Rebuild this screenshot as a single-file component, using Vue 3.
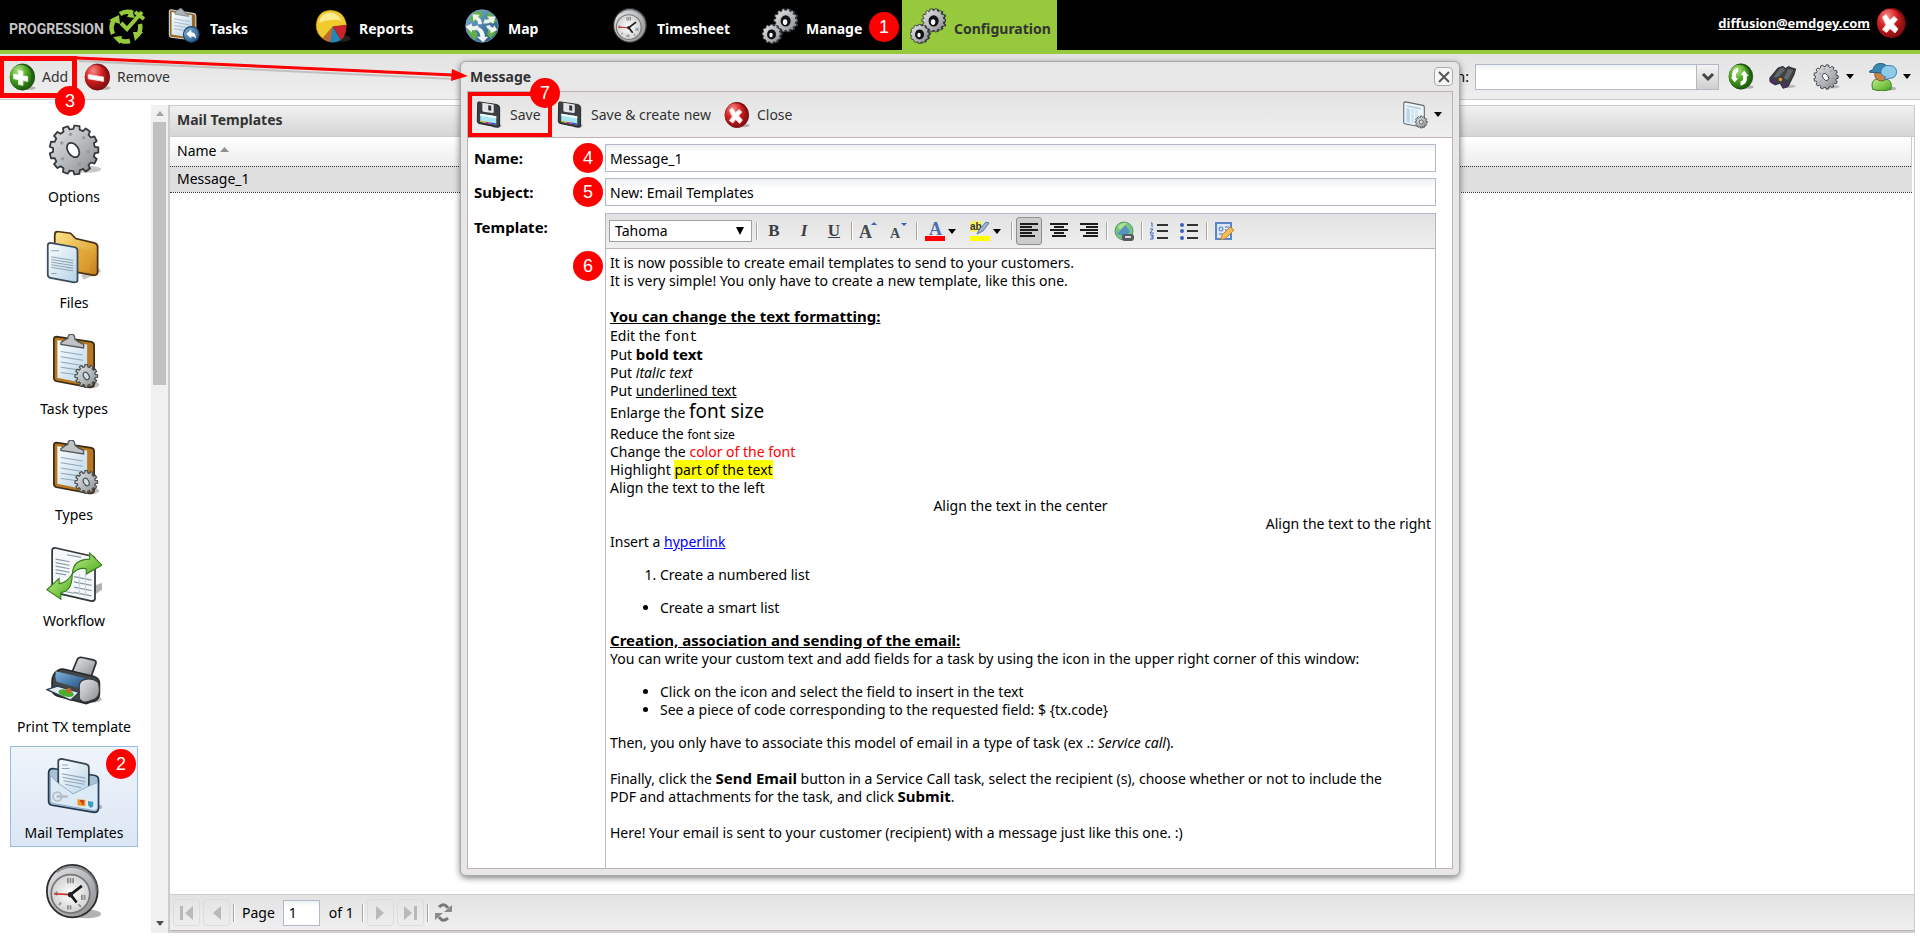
<script setup>
import { ref } from 'vue'

const navItems = [
  { label: 'Tasks', icon: 'i-tasks' },
  { label: 'Reports', icon: 'i-pie' },
  { label: 'Map', icon: 'i-globe' },
  { label: 'Timesheet', icon: 'i-clock' },
  { label: 'Manage', icon: 'i-gears', badge: 1 },
  { label: 'Configuration', icon: 'i-gears', active: true }
]

const sections = [
  { label: 'Options', icon: 'i-gear' },
  { label: 'Files', icon: 'i-files' },
  { label: 'Task types', icon: 'i-types' },
  { label: 'Types', icon: 'i-types' },
  { label: 'Workflow', icon: 'i-workflow' },
  { label: 'Print TX template', icon: 'i-printer' },
  { label: 'Mail Templates', icon: 'i-mail', active: true, badge: 2 },
  { label: '', icon: 'i-clock' }
]

const name = ref('Message_1')
const subject = ref('New: Email Templates')
const page = ref('1')
const search = ref('')
const family = ref('Tahoma')

// Outline of a cog with n teeth, centred on cx, cy
function cog(cx, cy, outer, inner, n) {
  const pts = []
  const step = (Math.PI * 2) / n
  for (let i = 0; i < n; i++) {
    const a = i * step
    const ring = [[-0.32, inner], [-0.22, outer], [0.22, outer], [0.32, inner]]
    for (const [k, r] of ring) {
      pts.push((cx + r * Math.cos(a + k * step)).toFixed(1) + ' ' + (cy + r * Math.sin(a + k * step)).toFixed(1))
    }
  }
  return 'M' + pts.join('L') + 'Z'
}
</script>

<template>
  <div class="app">
    <svg class="defs" width="0" height="0" aria-hidden="true">
      <defs>
        <linearGradient id="gSteel" x1="0" y1="0" x2="1" y2="1"><stop offset="0" stop-color="#e4e6e8" /><stop offset=".5" stop-color="#b9bcbf" /><stop offset="1" stop-color="#85888b" /></linearGradient>
        <linearGradient id="gGold" x1="0" y1="0" x2="1" y2="1"><stop offset="0" stop-color="#fbe48a" /><stop offset=".6" stop-color="#e5ae42" /><stop offset="1" stop-color="#bd7c17" /></linearGradient>
        <linearGradient id="gPaper" x1="0" y1="0" x2="1" y2="1"><stop offset="0" stop-color="#fdfeff" /><stop offset="1" stop-color="#b5d3e6" /></linearGradient>
        <linearGradient id="gBlue" x1="0" y1="0" x2="1" y2="1"><stop offset="0" stop-color="#7fb4dd" /><stop offset="1" stop-color="#1d4c7c" /></linearGradient>
        <radialGradient id="gRed" cx=".4" cy=".25" r=".8"><stop offset="0" stop-color="#f58a86" /><stop offset=".5" stop-color="#d31f20" /><stop offset="1" stop-color="#840c0e" /></radialGradient>
        <radialGradient id="gGreen" cx=".4" cy=".25" r=".8"><stop offset="0" stop-color="#b2e68a" /><stop offset=".5" stop-color="#4da423" /><stop offset="1" stop-color="#1b5a0a" /></radialGradient>
        <linearGradient id="gLeaf" x1="0" y1="0" x2="1" y2="1"><stop offset="0" stop-color="#c2f08c" /><stop offset="1" stop-color="#4ba81b" /></linearGradient>
        <radialGradient id="gFace"><stop offset="0" stop-color="#ffffff" /><stop offset="1" stop-color="#d2d2d2" /></radialGradient>
      </defs>

      <symbol id="i-gear" viewBox="0 0 64 64">
        <ellipse cx="46" cy="54" rx="17" ry="4" fill="#000" opacity=".22" />
        <path :d="cog(32, 32, 28, 24, 13)" fill="url(#gSteel)" stroke="#33373a" stroke-width="2" stroke-linejoin="round" />
        <g fill="#979a9d"><circle cx="18" cy="24" r="2" /><circle cx="28" cy="14" r="2" /><circle cx="43" cy="18" r="2" /><circle cx="48" cy="34" r="2" /><circle cx="38" cy="48" r="2" /><circle cx="19" cy="42" r="2" /></g>
        <ellipse cx="31" cy="32" rx="6" ry="9" transform="rotate(-35 31 32)" fill="#fff" stroke="#33373a" stroke-width="2" />
      </symbol>

      <symbol id="i-files" viewBox="0 0 64 64">
        <path d="M40 54l21-8 2 4-20 9z" fill="#000" opacity=".22" />
        <path d="M13 4q-3 0-3 4v38l45 8q4 0 4-4V22q0-4-4-5L34 12l-6-6z" fill="url(#gGold)" stroke="#4a3214" stroke-width="2" />
        <path d="M30 22l21 4-1 24-14-3z" fill="#e09b2c" opacity=".5" />
        <path d="M5 17l28 5q3 1 3 4v34q0 2-4 2L5 57q-3-1-3-4V20q0-3 3-3z" fill="url(#gPaper)" stroke="#3a4a5d" stroke-width="2" />
        <g stroke="#8497a8" stroke-width="1"><path d="M6 26h9M6 33l25 4M6 36l25 4M6 39l25 4M6 42l25 4M6 45l25 4M6 52h6" /></g>
      </symbol>

      <symbol id="i-types" viewBox="0 0 64 64">
        <ellipse cx="50" cy="58" rx="11" ry="4" fill="#000" opacity=".25" />
        <path d="M12 3l40 6q3 1 3 4v44q0 4-5 4L12 54q-3-1-3-4V6q0-3 3-3z" fill="#b87820" stroke="#3c2b17" stroke-width="2" />
        <path d="M13 7l34 5v45l-34-7z" fill="url(#gPaper)" />
        <path d="M17 10l4-3 4-2q0-5 4-5t4 6l4 3 6 3v4L17 12z" fill="#bfc3c6" stroke="#53585c" stroke-width="1.5" />
        <g stroke="#8ea7b9" stroke-width="1.4"><path d="M17 20l25 4M17 26l25 4M17 32l25 4M17 38l20 3M17 44l15 2" /></g>
        <path :d="cog(46, 48, 13, 10.5, 12)" fill="url(#gSteel)" stroke="#4b4f52" stroke-width="1.4" />
        <ellipse cx="46" cy="48" rx="3" ry="4.5" transform="rotate(-30 46 48)" fill="#cfe0ea" stroke="#4b4f52" stroke-width="1.4" />
      </symbol>

      <symbol id="i-workflow" viewBox="0 0 64 64">
        <path d="M54 46l10-4v8l-12 8z" fill="#000" opacity=".3" />
        <path d="M10 2l44 10q2 1 2 3v45q0 3-4 3L9 53q-2-1-2-3V5q0-3 3-3z" fill="#f4f8fb" stroke="#33373a" stroke-width="2" />
        <g stroke="#8c98a1" stroke-width="1.2"><path d="M24 10l16 3M11 15l16 3M11 19l16 3M11 23l16 3M11 27l16 3M11 31l12 2M32 35l20 4M32 41l20 4M32 47l20 4M32 53l20 4M12 50l20 4" /><path d="M38 32v24M45 32v26" stroke="#bdd2e0" /></g>
        <path d="M30 32q1-17 20-17V8l14 14-18 10v-6q-9-2-16 6z" fill="url(#gLeaf)" stroke="#2e7a14" stroke-width="1.2" />
        <path d="M30 32q0 20-13 21v8L1 50l14-13v6q9-1 15-11z" fill="url(#gLeaf)" stroke="#2e7a14" stroke-width="1.2" />
      </symbol>

      <symbol id="i-printer" viewBox="0 0 64 64">
        <ellipse cx="52" cy="54" rx="12" ry="4" fill="#000" opacity=".25" />
        <g transform="translate(0 4)">
          <path d="M36 4q1-2 4-2l14 3q4 1 3 4l-6 17-22-5z" fill="url(#gSteel)" stroke="#2e3133" stroke-width="2" />
          <path d="M7 30q0-9 7-13 3-2 8-1l33 8q6 2 6 8v12q0 8-10 9l-5 2-30-8q-8-2-9-7z" fill="#43474a" stroke="#25282a" stroke-width="2" />
          <path d="M11 18l34 8q-5 3-5 12L12 30q-2-6-1-12z" fill="url(#gBlue)" />
          <path d="M38 48V34q1-6 8-7 8-1 13 3 2 3 2 10 0 9-8 11-7 3-10 2-5-2-5-5z" fill="url(#gSteel)" stroke="#36393b" stroke-width="1.4" />
          <path d="M1 39l12-4 25 7-10 9z" fill="#e6edf2" stroke="#2c3e4f" stroke-width="1.5" />
          <ellipse cx="23" cy="43" rx="9" ry="4" transform="rotate(12 23 43)" fill="#4cae2f" /><circle cx="26" cy="40" r="3" fill="#c7682c" />
        </g>
      </symbol>

      <symbol id="i-mail" viewBox="0 0 64 64">
        <ellipse cx="56" cy="56" rx="9" ry="3" fill="#000" opacity=".25" />
        <path d="M8 12l48 8q4 1 4 5v32q0 5-5 5L7 54q-4-1-4-5V17q0-5 5-5z" fill="#a9c1d8" stroke="#22384f" stroke-width="2" />
        <path d="M14 4q0-3 4-3l28 6q3 1 3 4v25L31 47 14 30z" fill="url(#gPaper)" stroke="#3b4550" stroke-width="2" />
        <g stroke="#91a5b6" stroke-width="1.2"><path d="M18 8h7M18 12h9M18 18l27 5M19 22l26 5M20 26l24 4M22 30l18 4" /></g>
        <path d="M5 20l8 8 18 13 18-9 10-4v28q0 4-4 4L8 52q-3-1-3-4z" fill="#dceaf5" stroke="#8aa5bf" stroke-width="1" />
        <circle cx="13" cy="44" r="5" fill="none" stroke="#b6bdc6" stroke-width="2" /><path d="M12 44h13" stroke="#b6bdc6" stroke-width="3" />
        <path d="M36 47l9 1v7l-9-1z" fill="#ef8f1f" /><path d="M39 49h3v4" stroke="#c7311d" fill="none" stroke-width="2" /><path d="M48 49l6 1v5l-3 2-3-3z" fill="#3d9dc2" />
      </symbol>

      <symbol id="i-clock" viewBox="0 0 64 64">
        <ellipse cx="46" cy="57" rx="17" ry="5" fill="#000" opacity=".3" />
        <ellipse cx="30" cy="31" rx="29" ry="30" fill="url(#gSteel)" stroke="#2b2b2b" stroke-width="2" />
        <path d="M12 9Q26-1 42 6q16 8 16 25" fill="none" stroke="#6b6b6b" stroke-width="3" opacity=".6" />
        <circle cx="28" cy="34" r="22" fill="url(#gFace)" stroke="#777" stroke-width="2" />
        <g stroke="#8b8b8b" stroke-width="2"><path d="M25 16v6M28 16v6M31 16v6M25 47v5M28 47v5M41 35v6M44 35v6M12 31v5M15 47l2-3M40 49l-3-3" /></g>
        <path d="M28 35L41 25M28 35l7 9" stroke="#171717" stroke-width="3" /><path d="M29 35L9 34" stroke="#c82c2c" stroke-width="2" /><circle cx="28" cy="35" r="3" fill="#222" />
      </symbol>

      <symbol id="i-gears" viewBox="0 0 64 64">
        <path :d="cog(45, 22, 21, 18, 14)" fill="#34383a" />
        <path :d="cog(42, 22, 21, 18, 14)" fill="url(#gSteel)" stroke="#333" stroke-width="1.5" />
        <ellipse cx="42" cy="23" rx="9" ry="10" fill="#121212" /><ellipse cx="41" cy="25" rx="4" ry="5" fill="#fff" />
        <path :d="cog(20, 46, 17, 15, 12)" fill="#34383a" />
        <path :d="cog(17, 46, 17, 15, 12)" fill="url(#gSteel)" stroke="#333" stroke-width="1.5" />
        <ellipse cx="17" cy="47" rx="8" ry="9" fill="#121212" /><ellipse cx="16" cy="48" rx="3" ry="4" fill="#fff" />
      </symbol>

      <symbol id="i-tasks" viewBox="0 0 64 64">
        <path d="M9 3l41 7q3 1 3 4v40q0 4-5 3L9 52q-3-1-3-4V6q0-3 3-3z" fill="#9b6a22" stroke="#c9d6e2" stroke-width="2" />
        <path d="M10 7l36 6v40l-36-6z" fill="url(#gPaper)" />
        <path d="M16 7l6-4q4-5 8 0l4 6 6 3v3L16 11z" fill="#aab0b5" stroke="#5f666b" />
        <g stroke="#9eafbd" stroke-width="1.4"><path d="M14 19l28 5M14 25l28 5M14 31l24 4M14 37l20 3" /></g>
        <circle cx="45" cy="47" r="14" fill="url(#gBlue)" stroke="#1c3e63" stroke-width="2" />
        <path d="M36 46l9-8v5q9 1 8 11-3-4-8-4v4z" fill="#fff" />
      </symbol>

      <symbol id="i-pie" viewBox="0 0 64 64">
        <ellipse cx="48" cy="54" rx="15" ry="6" fill="#444" opacity=".5" />
        <path d="M2 30Q4 6 26 4q26 0 30 26l-24 3-18 21Q2 46 2 30z" fill="#f1ca2b" stroke="#b68a0e" />
        <path d="M7 26Q10 8 27 8q14 1 20 14-20-3-40 4z" fill="#fbec94" />
        <path d="M32 33L13 54q3 4 14 7l6-13z" fill="#bd6b2e" /><path d="M32 33l-5 28q9 2 19-4z" fill="#2387b8" /><path d="M32 33l14 24q10-8 10-27z" fill="#c9242a" />
      </symbol>

      <symbol id="i-globe" viewBox="0 0 64 64">
        <circle cx="32" cy="32" r="29" fill="url(#gBlue)" stroke="#94b7d6" stroke-width="1" />
        <path d="M10 18q8-12 20-13l3 8-8 9-12 3zM42 6q12 6 16 18l-9 4-8-8zM6 36l12 1 6 10-4 10Q8 48 6 36zM44 36l14 0q-2 12-11 18l-6-8z" fill="#62b146" />
        <g fill="#eef4ee"><path d="M15 11l13 1-3 4q7 4 7 13l-7 0q0-7-5-9l-3 4z" /><path d="M56 15l-4 13-4-3q-7 4-14 2l3-7q5 2 8-1l-4-4z" /><path d="M34 61l-11-10h6q0-9-7-12l5-5q10 5 10 17h6z" /><path d="M3 33l11-6v5q6 1 10-2l3 6q-6 5-13 3v5z" /><path d="M59 39l-12 6 0-5q-6-3-8-8l7-2q1 4 5 5l3-4z" /></g>
      </symbol>

      <symbol id="i-floppy" viewBox="0 0 64 64">
        <path d="M50 52l12 4-6 6H40z" fill="#000" opacity=".3" />
        <path d="M4 3q0-2 3-2l42 6q7 2 7 7v42q0 5-5 5L7 52q-4-1-4-5z" fill="#3d4043" stroke="#151617" stroke-width="2" />
        <path d="M15 3l27 4v18q0 2-3 2L17 24q-2-1-2-3z" fill="#e6e7e8" /><path d="M29 9l7 1v12l-7-1z" fill="#333" />
        <path d="M10 29l38 6v20l-38-7z" fill="#a6e5f3" /><path d="M10 29l38 6v5l-38-6z" fill="#f1fbfd" />
        <path d="M10 45l13 3v3l-13-3z" fill="#d3b51c" /><path d="M23 48l13 2v3l-13-2z" fill="#c934a9" /><path d="M36 50l12 2v3l-12-2z" fill="#2f4ec9" />
      </symbol>

      <symbol id="i-redx" viewBox="0 0 64 64">
        <ellipse cx="50" cy="57" rx="13" ry="4" fill="#000" opacity=".25" />
        <ellipse cx="33" cy="32" rx="28" ry="30" fill="#8e1012" stroke="#5e0809" stroke-width="1.5" /><ellipse cx="29" cy="32" rx="25" ry="28" fill="url(#gRed)" />
        <path d="M15 20l7-5 8 11 8-7 7 6-8 9 9 10-6 8-10-9-7 8-8-6 7-9z" fill="#fff" stroke="#f7d6d6" stroke-linejoin="round" stroke-width="2" />
      </symbol>

      <symbol id="i-minus" viewBox="0 0 64 64">
        <ellipse cx="50" cy="57" rx="13" ry="4" fill="#000" opacity=".25" />
        <ellipse cx="33" cy="32" rx="28" ry="30" fill="#8e1012" stroke="#5e0809" stroke-width="1.5" /><ellipse cx="29" cy="32" rx="25" ry="28" fill="url(#gRed)" />
        <path d="M12 26l35 6v10l-35-6z" fill="#fff" stroke="#f7d6d6" stroke-width="2" stroke-linejoin="round" />
      </symbol>

      <symbol id="i-plus" viewBox="0 0 64 64">
        <ellipse cx="50" cy="57" rx="13" ry="4" fill="#000" opacity=".25" />
        <ellipse cx="33" cy="32" rx="28" ry="30" fill="#20600e" stroke="#103d06" stroke-width="1.5" /><ellipse cx="29" cy="32" rx="25" ry="28" fill="url(#gGreen)" />
        <path d="M24 17l10 2v10l11 2v11l-11-2v11l-10-2V38l-11-2V25l11 2z" fill="#fff" stroke="#e4f5da" stroke-width="2" stroke-linejoin="round" />
      </symbol>

      <symbol id="i-refresh" viewBox="0 0 64 64">
        <ellipse cx="50" cy="57" rx="13" ry="4" fill="#000" opacity=".25" />
        <ellipse cx="33" cy="32" rx="28" ry="30" fill="#20600e" stroke="#103d06" stroke-width="1.5" /><ellipse cx="29" cy="32" rx="25" ry="28" fill="url(#gGreen)" />
        <path d="M26 11q-16 3-14 23l-3 0 9 12 8-9-5-2q-1-12 5-14z" fill="#fff" /><path d="M32 54q17-3 15-23l4 0-10-13-8 9 5 3q2 12-6 14z" fill="#fff" />
      </symbol>

      <symbol id="i-binoculars" viewBox="0 0 64 64">
        <ellipse cx="46" cy="55" rx="16" ry="4" fill="#000" opacity=".2" />
        <path d="M20 12l12-4 6 5 7-5 6 3 11 3-4 14-14 28-12 4-7-12-12 4L1 44v-9z" fill="#3e4144" stroke="#1b1c1e" stroke-width="2" />
        <path d="M23 14l9-3 5 6-18 17-9 0zM44 14l12 3-13 23-9-4z" fill="#64686b" />
        <ellipse cx="9" cy="43" rx="7" ry="6" fill="#4b3161" /><ellipse cx="36" cy="53" rx="7" ry="6" fill="#4b3161" /><circle cx="26" cy="39" r="4" fill="#ef9a20" />
      </symbol>

      <symbol id="i-user" viewBox="0 0 64 64">
        <ellipse cx="50" cy="58" rx="12" ry="4" fill="#000" opacity=".25" />
        <path d="M7 50q0-12 13-14l20 1q11 3 11 15l-1 8q-21 7-42 0z" fill="url(#gLeaf)" stroke="#2d7115" stroke-width="2" />
        <ellipse cx="28" cy="26" rx="15" ry="15" fill="#c98343" stroke="#613a17" stroke-width="1.5" />
        <path d="M12 22l-11-1q-1-4 8-5Q11 1 27 1q12 0 17 12l-4 10z" fill="#3a89b3" stroke="#1c536f" stroke-width="2" />
        <path d="M38 6q24-3 25 13 0 16-16 16l-12 4 3-7q-11-3-11-12 1-11 11-14z" fill="#8fcbe9" stroke="#2c739b" stroke-width="2" />
      </symbol>

      <symbol id="i-sheet" viewBox="0 0 64 64">
        <path d="M8 2l40 8q3 1 3 4v43q0 4-4 3L6 52q-2-1-2-3V5q0-3 4-3z" fill="#eef6fb" stroke="#62696f" stroke-width="2.5" />
        <path d="M10 9l34 7v4L10 13z" fill="#b9cfde" /><path d="M10 16l8 2v32l-8-2z" fill="#b9d5e8" /><path d="M21 18l6 1v32l-6-1z" fill="#cfe3f0" /><path d="M30 20l6 1v31l-6-1z" fill="#cfe3f0" />
        <path :d="cog(44, 48, 14, 11, 12)" fill="url(#gSteel)" stroke="#5b6063" stroke-width="2" /><circle cx="44" cy="48" r="4.5" fill="#dfe4e7" stroke="#5b6063" stroke-width="2" />
      </symbol>
    </svg>

    <header class="topbar">
      <div class="logo">
        <span class="brand">PROGRESSION</span>
        <svg width="38" height="36" viewBox="0 0 38 36" aria-hidden="true">
          <g fill="none" stroke="#97c93d" stroke-width="4.5">
            <path d="M5 25A14 14 0 0 1 7 10" /><path d="M12 5A14 14 0 0 1 25 4" /><path d="M32 15A14 14 0 0 1 29 27" /><path d="M22 32A14 14 0 0 1 9 29" />
            <path d="M13 14l6 6L34 3" stroke-width="4" />
          </g>
          <path d="M1 11l10-5 1 9zM23 0l4 9-8-1zM25 23h10l-8 9zM14 27l-2 8-7-7z" fill="#97c93d" /><path d="M27 3l9 7" stroke="#97c93d" stroke-width="4" />
        </svg>
      </div>
      <nav class="nav" aria-label="Modules">
        <button v-for="n in navItems" :key="n.label" type="button" class="tab" :class="{ active: n.active }">
          <svg width="36" height="36" aria-hidden="true"><use :href="'#' + n.icon" /></svg>
          <span>{{ n.label }}</span>
          <b v-if="n.badge" class="badge b-nav">{{ n.badge }}</b>
        </button>
      </nav>
      <a class="account" href="#">diffusion@emdgey.com</a>
      <button type="button" class="logout" aria-label="Log out"><svg width="32" height="36" aria-hidden="true"><use href="#i-redx" /></svg></button>
    </header>

    <div class="toolbar">
      <button type="button" class="tool marked">
        <svg width="28" height="28" aria-hidden="true"><use href="#i-plus" /></svg><span>Add</span>
        <b class="badge b-add">3</b>
      </button>
      <button type="button" class="tool"><svg width="28" height="28" aria-hidden="true"><use href="#i-minus" /></svg><span>Remove</span></button>
      <div class="tools-right">
        <label for="search">Search in:</label>
        <div class="combo">
          <input id="search" v-model="search" type="text">
          <button type="button" aria-label="Open list"><svg width="12" height="8" viewBox="0 0 12 8"><path d="M1 1l5 5 5-5" fill="none" stroke="#444" stroke-width="3" /></svg></button>
        </div>
        <button type="button" class="mini" aria-label="Refresh"><svg width="27" height="27"><use href="#i-refresh" /></svg></button>
        <button type="button" class="mini" aria-label="Find"><svg width="28" height="27"><use href="#i-binoculars" /></svg></button>
        <button type="button" class="mini" aria-label="Settings"><svg width="28" height="28"><use href="#i-gear" /></svg><i class="caret"></i></button>
        <button type="button" class="mini" aria-label="User"><svg width="28" height="28"><use href="#i-user" /></svg><i class="caret"></i></button>
      </div>
    </div>

    <div class="main">
      <aside class="side">
        <div class="items">
          <button v-for="(s, i) in sections" :key="i" type="button" class="item" :class="{ active: s.active }" :aria-label="s.label || 'Schedule'">
            <svg width="56" height="56" aria-hidden="true"><use :href="'#' + s.icon" /></svg>
            <span>{{ s.label }}</span>
            <b v-if="s.badge" class="badge b-side">{{ s.badge }}</b>
          </button>
        </div>
        <div class="scroll">
          <svg width="8" height="5" viewBox="0 0 8 5"><path d="M4 0l4 5H0z" fill="#a3a3a3" /></svg>
          <div class="thumb"></div>
          <svg width="8" height="5" viewBox="0 0 8 5"><path d="M0 0h8L4 5z" fill="#505050" /></svg>
        </div>
      </aside>

      <section class="panel">
        <h2>Mail Templates</h2>
        <div class="grid">
          <table>
            <thead><tr><th>Name <svg width="9" height="5" viewBox="0 0 9 5"><path d="M4.500 0L9 5H0z" fill="#909090" /></svg></th></tr></thead>
            <tbody><tr><td>Message_1</td></tr></tbody>
          </table>
        </div>
        <footer class="pager">
          <button type="button" class="pg" aria-label="First page"><svg width="14" height="14" viewBox="0 0 14 14" fill="#b9b9b9"><path d="M0 0h3v14H0zM13 0v14L5 7z" /></svg></button>
          <button type="button" class="pg" aria-label="Previous page"><svg width="14" height="14" viewBox="0 0 14 14" fill="#b9b9b9"><path d="M11 0v14L3 7z" /></svg></button>
          <i class="sep"></i>
          <label for="page">Page</label>
          <input id="page" v-model="page" type="text">
          <span class="of">of 1</span>
          <i class="sep"></i>
          <button type="button" class="pg" aria-label="Next page"><svg width="14" height="14" viewBox="0 0 14 14" fill="#b9b9b9"><path d="M3 0v14l8-7z" /></svg></button>
          <button type="button" class="pg" aria-label="Last page"><svg width="14" height="14" viewBox="0 0 14 14" fill="#b9b9b9"><path d="M11 0h3v14h-3zM1 0v14l8-7z" /></svg></button>
          <i class="sep"></i>
          <button type="button" class="reload" aria-label="Reload">
            <svg width="19" height="19" viewBox="0 0 19 19"><g fill="none" stroke="#777" stroke-width="3"><path d="M5 4Q10-1 14 5" /><path d="M14 15q-5 5-9-1" /></g><path d="M18 2v7h-8zM1 17v-7h8z" fill="#8b8b8b" /></svg>
          </button>
        </footer>
      </section>
    </div>

    <div class="overlay">
      <section class="dialog" role="dialog" aria-label="Message">
        <div class="title">
          <h1>Message</h1>
          <button type="button" class="x" aria-label="Close window"><svg width="12" height="12" viewBox="0 0 12 12"><path d="M1 1l10 10M11 1L1 11" stroke="#555" stroke-width="2" /></svg></button>
        </div>
        <div class="inner">
          <div class="dtools">
            <button type="button" class="tool marked2"><svg width="27" height="28" aria-hidden="true"><use href="#i-floppy" /></svg><span>Save</span><b class="badge b-save">7</b></button>
            <button type="button" class="tool"><svg width="27" height="28" aria-hidden="true"><use href="#i-floppy" /></svg><span>Save &amp; create new</span></button>
            <button type="button" class="tool close"><svg width="27" height="28" aria-hidden="true"><use href="#i-redx" /></svg><span>Close</span></button>
            <button type="button" class="mini insert" aria-label="Insert field"><svg width="28" height="28"><use href="#i-sheet" /></svg><i class="caret"></i></button>
          </div>
          <form class="form" @submit.prevent>
            <label for="f-name">Name:</label>
            <div class="cell"><b class="badge b-field">4</b><input id="f-name" v-model="name" type="text"></div>
            <label for="f-subject">Subject:</label>
            <div class="cell"><b class="badge b-field">5</b><input id="f-subject" v-model="subject" type="text"></div>
            <label id="l-template" class="tpl">Template:</label>
            <div class="editor">
              <b class="badge b-editor">6</b>
              <div class="etools">
                <div class="font">
                  <select v-model="family" aria-label="Font"><option>Tahoma</option></select>
                  <svg width="8" height="8" viewBox="0 0 8 8"><path d="M0 0h8L4 8z" /></svg>
                </div>
                <i class="sep"></i>
                <button type="button" class="eb serif"><b>B</b></button>
                <button type="button" class="eb serif"><em>I</em></button>
                <button type="button" class="eb serif"><u>U</u></button>
                <i class="sep"></i>
                <button type="button" class="eb" aria-label="Grow text"><svg width="20" height="20" viewBox="0 0 20 20"><text x="0" y="17" font-family="Liberation Serif, serif" font-weight="bold" font-size="18" fill="#444c50">A</text><path d="M12 4l3-3 3 3z" fill="#3a63b0" /></svg></button>
                <button type="button" class="eb" aria-label="Shrink text"><svg width="20" height="20" viewBox="0 0 20 20"><text x="1" y="17" font-family="Liberation Serif, serif" font-weight="bold" font-size="14" fill="#444c50">A</text><path d="M12 2h6l-3 3z" fill="#3a63b0" /></svg></button>
                <i class="sep"></i>
                <button type="button" class="eb wide" aria-label="Font color"><svg width="20" height="20" viewBox="0 0 20 20"><text x="4" y="14" font-family="Liberation Serif, serif" font-weight="bold" font-size="18" fill="#4a6cb0">A</text><path d="M0 15h20v5H0z" fill="#f00" /></svg><i class="caret"></i></button>
                <button type="button" class="eb wide" aria-label="Highlight color"><svg width="20" height="20" viewBox="0 0 20 20"><path d="M0 0h12v11H0z" fill="#f4f06a" /><text x="0" y="9" font-family="Liberation Sans, sans-serif" font-weight="bold" font-size="10" fill="#333">ab</text><path d="M19 2l-6 8-6 3 2-4 7-8z" fill="#9bb5d9" stroke="#58779f" /><path d="M0 15h20v5H0z" fill="#ff0" /></svg><i class="caret"></i></button>
                <i class="sep"></i>
                <button type="button" class="eb on" aria-label="Align left"><svg width="18" height="16" viewBox="0 0 18 16"><path d="M0 1h18M0 4h12M0 7h18M0 10h12M0 13h15" stroke="#1d1d1d" stroke-width="2" /></svg></button>
                <button type="button" class="eb" aria-label="Align center"><svg width="18" height="16" viewBox="0 0 18 16"><path d="M0 1h18M4 4h10M0 7h18M4 10h10M2 13h14" stroke="#1d1d1d" stroke-width="2" /></svg></button>
                <button type="button" class="eb" aria-label="Align right"><svg width="18" height="16" viewBox="0 0 18 16"><path d="M0 1h18M6 4h12M0 7h18M6 10h12M3 13h15" stroke="#1d1d1d" stroke-width="2" /></svg></button>
                <i class="sep"></i>
                <button type="button" class="eb" aria-label="Link"><svg width="21" height="21" viewBox="0 0 21 21"><circle cx="10" cy="10" r="9" fill="#7ac483" stroke="#4c9a62" /><path d="M3 13l8-9 5 6-4 6z" fill="#5694c4" /><path d="M4 5q5-4 9-3l-7 7z" fill="#b0e48f" /><rect x="8" y="13" width="12" height="7" rx="3" fill="#555b60" /><path d="M11 16h6" stroke="#d6dadd" stroke-width="2" /></svg></button>
                <i class="sep"></i>
                <button type="button" class="eb" aria-label="Numbered list"><svg width="18" height="18" viewBox="0 0 18 18"><path d="M7 3h11M7 9h11M7 16h11" stroke="#333" stroke-width="2" /><path d="M1 1h1v4M0 7h3l-3 4h4M0 13h3v4H0M1 15h2" stroke="#3a63c0" fill="none" /></svg></button>
                <button type="button" class="eb" aria-label="Bulleted list"><svg width="18" height="18" viewBox="0 0 18 18"><path d="M7 3h11M7 9h11M7 16h11" stroke="#333" stroke-width="2" /><g fill="#3a63c0"><circle cx="2" cy="3" r="2" /><circle cx="2" cy="9" r="2" /><circle cx="2" cy="16" r="2" /></g></svg></button>
                <i class="sep"></i>
                <button type="button" class="eb" aria-label="Edit source"><svg width="19" height="19" viewBox="0 0 19 19"><rect x="1" y="1" width="15" height="16" fill="#dbe7f8" stroke="#5c84c9" stroke-width="2" /><circle cx="6" cy="7" r="2" fill="none" stroke="#4a74be" /><path d="M10 5h4M10 8h3M4 12h4" stroke="#4a74be" /><path d="M6 18l1-5 8-8 4 3-8 8z" fill="#f5bd57" stroke="#c8842a" /></svg></button>
              </div>
              <div class="text" contenteditable="true" role="textbox" aria-multiline="true" aria-labelledby="l-template">
                <div>It is now possible to create email templates to send to your customers.</div>
                <div>It is very simple! You only have to create a new template, like this one.</div>
                <div><br></div>
                <div><b><u>You can change the text formatting:</u></b></div>
                <div class="l-mono">Edit the <span class="mono">font</span></div>
                <div>Put <b>bold text</b></div>
                <div>Put <em>italic text</em></div>
                <div>Put <u>underlined text</u></div>
                <div class="l-big">Enlarge the <span class="big">font size</span></div>
                <div>Reduce the <span class="small">font size</span></div>
                <div>Change the <span class="red">color of the font</span></div>
                <div>Highlight <mark>part of the text</mark></div>
                <div>Align the text to the left</div>
                <div class="center">Align the text in the center</div>
                <div class="right">Align the text to the right</div>
                <div>Insert a <a href="#">hyperlink</a></div>
                <ol><li>Create a numbered list</li></ol>
                <ul><li>Create a smart list</li></ul>
                <div><b><u>Creation, association and sending of the email:</u></b></div>
                <div>You can write your custom text and add fields for a task by using the icon in the upper right corner of this window:</div>
                <ul><li>Click on the icon and select the field to insert in the text</li><li>See a piece of code corresponding to the requested field: $ {tx.code}</li></ul>
                <div>Then, you only have to associate this model of email in a type of task (ex .: <em>Service call</em>).</div>
                <div><br></div>
                <div class="narrow">Finally, click the <b>Send Email</b> button in a Service Call task, select the recipient (s), choose whether or not to include the PDF and attachments for the task, and click <b>Submit</b>.</div>
                <div><br></div>
                <div>Here! Your email is sent to your customer (recipient) with a message just like this one. :)</div>
              </div>
            </div>
          </form>
        </div>
        <svg class="arrow" width="394" height="32" viewBox="0 0 394 32" aria-hidden="true">
          <path d="M4 7l374 18" stroke="#888" stroke-width="2" opacity=".4" />
          <path d="M2 4l376 17" stroke="#f00" stroke-width="3" /><path d="M377 15l16 7-17 5z" fill="#f00" />
        </svg>
      </section>
    </div>
  </div>
</template>

<style>
body { background: #fff; }
</style>

<style scoped>
.app, .app * { box-sizing: border-box; }
.app { position: relative; display: flex; flex-direction: column; height: 100vh; padding-bottom: 4px; overflow: hidden; font: 14px/18px "Noto Sans", "Open Sans", sans-serif; color: #000; }
.defs { position: absolute; }
button { font: inherit; color: inherit; background: none; border: 0; padding: 0; margin: 0; }
input, select { font: inherit; color: inherit; border-radius: 0; margin: 0; }
svg { flex: none; overflow: visible; }
h1, h2 { margin: 0; font-size: 14px; line-height: 18px; color: #333; }
.badge { position: absolute; display: flex; align-items: center; justify-content: center; width: 30px; height: 30px; border-radius: 50%; background: #f00; color: #fff; font: 18px/30px "Liberation Sans", Arial, sans-serif; z-index: 3; }
.caret { border: 4px solid transparent; border-top: 5px solid #000; border-bottom: 0; }
.sep { width: 1px; height: 18px; background: #aca899; box-shadow: 1px 0 #fff; flex: none; }

.topbar { display: flex; align-items: center; height: 54px; background: #000; border-bottom: 4px solid #97c93d; flex: none; }
.logo { display: flex; align-items: center; width: 157px; padding: 4px 0 0 9px; gap: 5px; flex: none; }
.brand { width: 94px; padding-top: 4px; font: bold 14px/20px Roboto, "Liberation Sans", sans-serif; color: #c4c4c4; }
.nav { display: flex; align-self: stretch; }
.tab { position: relative; display: flex; align-items: center; gap: 8px; width: 149px; padding: 4px 6px 0 9px; color: #fff; font-weight: bold; }
.tab svg { margin-bottom: 2px; }
.tab span { padding-top: 4px; }
.tab.active { width: auto; padding-left: 8px; background: #97c93d; color: #333; }
.b-nav { right: 3px; top: 12px; }
.account { margin-left: auto; margin-bottom: 4px; color: #fff; font-weight: bold; font-size: 13px; }
.logout { display: flex; margin: 0 13px 4px 5px; }

.toolbar { display: flex; align-items: center; height: 46px; padding-right: 9px; background: linear-gradient(#e3e3e3, #efefef); border-bottom: 1px solid #ccc; color: #333; flex: none; }
.tool { position: relative; display: flex; align-items: center; gap: 6px; height: 42px; color: #333; white-space: nowrap; }
.marked { width: 77px; padding-left: 4px; border: 5px solid #f00; border-left-width: 4px; margin-right: 6px; }
.b-add { right: -13px; top: 25px; }
.tools-right { display: flex; align-items: center; margin-left: auto; color: #000; }
.combo { display: flex; width: 244px; height: 26px; margin: 0 8px 0 6px; }
.combo input { flex: 1; min-width: 0; border: 1px solid #b5b8c8; background: linear-gradient(#eef3f3, #fff 6px); }
.combo button { display: flex; align-items: center; justify-content: center; width: 22px; border: 1px solid #b5b8c8; border-left: 0; background: linear-gradient(#f4f4f4, #cfcfcf); }
.mini { display: flex; align-items: center; gap: 6px; margin-right: 15px; }
.mini:last-child { margin-right: 0; }

.main { display: flex; flex: 1; min-height: 0; padding: 5px 5px 0 0; }
.side { display: flex; width: 168px; overflow: hidden; flex: none; }
.items { flex: 1; display: flex; flex-direction: column; gap: 5px; padding: 5px 13px 0 10px; }
.item { position: relative; display: flex; flex-direction: column; align-items: center; gap: 10px; height: 101px; padding-top: 11px; border: 1px solid transparent; flex: none; white-space: nowrap; }
.item.active { border-color: #99bbe8; background: linear-gradient(#eff4fb, #dce6f4); }
.b-side { right: 1px; top: 2px; }
.scroll { display: flex; flex-direction: column; align-items: center; width: 17px; padding: 6px 0 7px; background: #f0f0f0; }
.scroll .thumb { width: 13px; height: 263px; margin: 6px 0 auto; background: #c1c1c1; }

.panel { display: flex; flex-direction: column; flex: 1; min-width: 0; border: 1px solid #ccc; border-left-width: 2px; border-bottom: 2px solid #d0d0d0; }
.panel h2 { padding: 5px 7px 7px; border-bottom: 1px solid #ccc; background: linear-gradient(#f0f0f0, #d5d5d5); }
.grid { flex: 1; padding-right: 2px; }
table { width: 100%; border-collapse: collapse; }
th { height: 29px; padding: 0 7px; text-align: left; font-weight: normal; background: linear-gradient(#fff, #ececec); border-right: 1px solid #ccc; }
th svg { margin: 0 0 4px; }
td { height: 26px; padding: 0 7px; background: #dfdfdf; border: 1px dotted #333; border-width: 1px 0; }
.pager { display: flex; align-items: center; height: 37px; padding-left: 3px; border-top: 1px solid #ccc; border-bottom: 1px solid #c0b0b4; background: linear-gradient(#e3e3e3, #efefef); }
.pg { display: flex; align-items: center; justify-content: center; width: 27px; height: 27px; border: 1px solid #ddd; border-radius: 3px; margin-right: 3px; }
.pager label { margin: 0 8px; }
.pager input { width: 37px; height: 26px; padding: 0 5px; border: 1px solid #b5b8c8; background: linear-gradient(#eef3f3, #fff 6px); }
.of { margin: 0 8px 0 9px; }
.pager .of + .sep { margin-right: 4px; }
.reload { display: flex; margin-left: 6px; }

.overlay { position: absolute; inset: 0; display: flex; align-items: center; justify-content: center; z-index: 2; }
.dialog { position: relative; width: 1000px; padding: 0 6px 6px; background: #e7e7e7; border: 1px solid #aaa; border-radius: 6px; box-shadow: 0 2px 6px rgba(0, 0, 0, .5); }
.title { display: flex; align-items: center; justify-content: space-between; height: 29px; padding-left: 3px; }
.x { display: flex; align-items: center; justify-content: center; width: 19px; height: 19px; border: 1px solid #aaa; border-radius: 4px; background: #f6f6f6; }
.inner { border: 1px solid #bfb2b6; background: #fff; }
.dtools { display: flex; align-items: center; height: 46px; background: linear-gradient(#e3e3e3, #efefef); border-bottom: 1px solid #bfb2b6; }
.dtools .tool { gap: 7px; }
.dtools .marked2 { width: 84px; height: 45px; padding-left: 4px; border: 4px solid #f00; margin-right: 5px; }
.b-save { right: -12px; top: -18px; }
.close { margin-left: 12px; }
.dtools .insert { margin: 0 10px 0 auto; gap: 4px; }
.form { display: grid; grid-template-columns: 131px minmax(0, 1fr); row-gap: 6px; padding: 6px 16px 0 6px; }
.form > label { padding-top: 5px; font-weight: bold; font-size: 15px; }
.cell { position: relative; }
.cell input { display: block; width: 100%; height: 28px; padding: 0 4px; border: 1px solid #b5b8c8; background: linear-gradient(#edf2f2, #fff 9px); }
.b-field { left: -32px; top: -1px; }
.b-editor { left: -33px; top: 37px; }
.editor { position: relative; margin-top: 1px; border: 1px solid #b5b8c8; border-bottom: 0; }
.form > .tpl { padding-top: 6px; }
.etools { display: flex; align-items: center; gap: 4px; height: 35px; padding-left: 3px; border-bottom: 1px solid #bfb2b6; background: linear-gradient(#e2e2e2, #efefef); }
.font { position: relative; width: 143px; }
.font select { display: block; width: 100%; height: 22px; padding: 0 5px; appearance: none; border: 1px solid #a0a0a0; background: #fff; font-size: 14px; line-height: 18px; }
.font svg { position: absolute; right: 8px; top: 7px; pointer-events: none; }
.eb { display: flex; align-items: center; justify-content: center; width: 26px; height: 28px; flex: none; }
.eb.wide { width: 41px; gap: 3px; padding-right: 3px; }
.eb.on { border: 1px solid #8f8f8f; border-radius: 3px; background: #ccc; }
.serif { font: bold 17px/20px "Liberation Serif", serif; color: #3a3f43; }
.text { padding: 5px 4px 26px; outline: 0; }
.text b { font-size: 15px; line-height: 16px; }
.text ol, .text ul { margin: 15px 0; padding-left: 50px; }
.l-mono { line-height: 20px; }
.l-big { line-height: 25px; }
.mono { font: 14px/14px "Liberation Mono", monospace; }
.big { font-size: 19px; line-height: 18px; }
.small { font-size: 12px; line-height: 14px; }
.red { color: #f00; }
mark { background: #ff0; color: #000; }
.center { text-align: center; }
.right { text-align: right; }
.narrow { padding-right: 24px; }
.text a { color: #00f; }
.arrow { position: absolute; left: -386px; top: -8px; pointer-events: none; }
</style>
